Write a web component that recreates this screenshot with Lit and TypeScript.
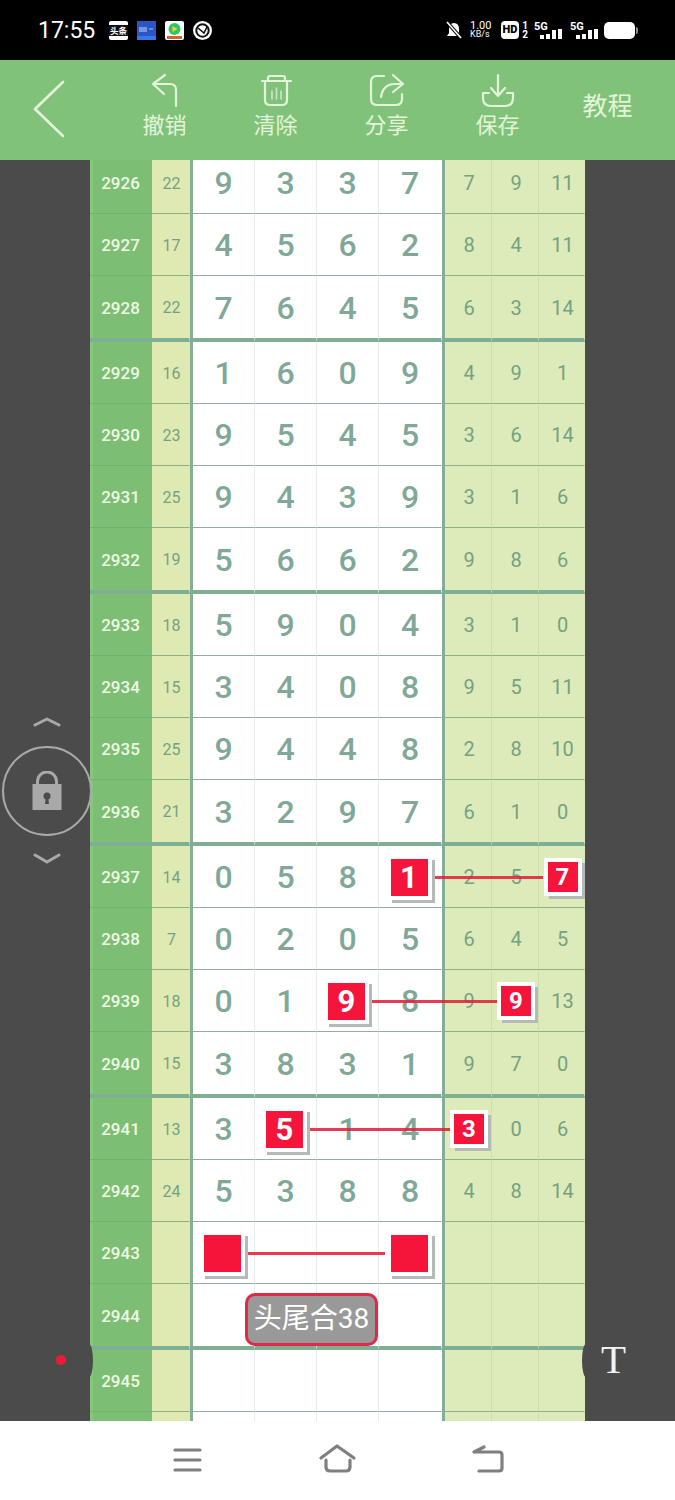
import { LitElement, html, css, svg, nothing } from "lit";
import { customElement } from "lit/decorators.js";

interface Mark {
  col: number; // 0-3 = white columns, 4-6 = green columns
  text?: string;
}

interface Row {
  no: number;
  sum?: number;
  digits?: number[];
  right?: number[];
  marks?: Mark[];
  line?: [number, number]; // page x start/end of the connector
  label?: string;
}

const ROWS: Row[] = [
  { no: 2926, sum: 22, digits: [9, 3, 3, 7], right: [7, 9, 11] },
  { no: 2927, sum: 17, digits: [4, 5, 6, 2], right: [8, 4, 11] },
  { no: 2928, sum: 22, digits: [7, 6, 4, 5], right: [6, 3, 14] },
  { no: 2929, sum: 16, digits: [1, 6, 0, 9], right: [4, 9, 1] },
  { no: 2930, sum: 23, digits: [9, 5, 4, 5], right: [3, 6, 14] },
  { no: 2931, sum: 25, digits: [9, 4, 3, 9], right: [3, 1, 6] },
  { no: 2932, sum: 19, digits: [5, 6, 6, 2], right: [9, 8, 6] },
  { no: 2933, sum: 18, digits: [5, 9, 0, 4], right: [3, 1, 0] },
  { no: 2934, sum: 15, digits: [3, 4, 0, 8], right: [9, 5, 11] },
  { no: 2935, sum: 25, digits: [9, 4, 4, 8], right: [2, 8, 10] },
  { no: 2936, sum: 21, digits: [3, 2, 9, 7], right: [6, 1, 0] },
  {
    no: 2937, sum: 14, digits: [0, 5, 8, 1], right: [2, 5, 7],
    marks: [{ col: 3, text: "1" }, { col: 6, text: "7" }], line: [432, 543],
  },
  { no: 2938, sum: 7, digits: [0, 2, 0, 5], right: [6, 4, 5] },
  {
    no: 2939, sum: 18, digits: [0, 1, 9, 8], right: [9, 9, 13],
    marks: [{ col: 2, text: "9" }, { col: 5, text: "9" }], line: [371, 497],
  },
  { no: 2940, sum: 15, digits: [3, 8, 3, 1], right: [9, 7, 0] },
  {
    no: 2941, sum: 13, digits: [3, 5, 1, 4], right: [3, 0, 6],
    marks: [{ col: 1, text: "5" }, { col: 4, text: "3" }], line: [310, 451],
  },
  { no: 2942, sum: 24, digits: [5, 3, 8, 8], right: [4, 8, 14] },
  { no: 2943, marks: [{ col: 0 }, { col: 3 }], line: [247, 385] },
  { no: 2944, label: "头尾合38" },
  { no: 2945 },
  { no: 2946 },
];

const TABLE_LEFT = 90;
const LAST_VISIBLE_NO = 2945; // the row after this one only peeks in, its number is below the fold

const ICONS = {
  undo: svg`<path d="M22 5 10 14l11 10M10 14h17q6 0 6 6v16"/>`,
  trash: svg`<path d="M8 11h29M14 11V8q0-2 2-2h13q2 0 2 2v3M11 11v19q0 5 5 5h12q5 0 5-5V11"/><path d="M18 21v8M22.5 18v11M27 21v8" stroke-width="1.6" opacity=".75"/>`,
  share: svg`<path d="M19 6h-7q-6 0-6 6v17q0 6 6 6h19q6 0 6-6v-5"/><path d="M28 5l10 9-10 8M38 14h-8q-12 0-14 13"/>`,
  save: svg`<path d="M22 5v21M15 18l7 8 7-8"/><path d="M13 23H7v5q0 8 8 8h14q8 0 8-8v-5h-6"/>`,
};

@customElement("app-root")
export class AppRoot extends LitElement {
  static styles = css`
    :host {
      display: block;
      width: 675px;
      height: 1500px;
      overflow: hidden;
      background: #fff;
      font-family: Roboto, "Noto Sans CJK SC", sans-serif;
    }
    .status {
      height: 60px;
      background: #000;
      color: #fff;
      display: flex;
      align-items: center;
      box-sizing: border-box;
      padding: 0 40px 0 38px;
    }
    .time {
      font-size: 23px;
      width: 71px;
    }
    .apps {
      display: flex;
      gap: 9px;
    }
    .app {
      width: 19px;
      height: 19px;
      display: block;
    }
    .sys {
      margin-left: auto;
      display: flex;
      align-items: center;
    }
    .speed {
      font-size: 9px;
      line-height: 9px;
      margin-left: 7px;
      width: 31px;
      text-align: left;
    }
    .speed b {
      display: block;
      font-size: 11px;
      font-weight: 400;
    }
    .hd {
      background: #fff;
      color: #000;
      font-size: 11px;
      font-weight: 900;
      width: 18px;
      height: 18px;
      line-height: 18px;
      text-align: center;
      border-radius: 4px;
    }
    .sim {
      font-size: 10px;
      font-weight: 700;
      line-height: 9px;
      width: 8px;
      margin-left: 2px;
      text-align: center;
    }
    .net {
      position: relative;
      width: 28px;
      height: 18px;
      margin-left: 8px;
      font-size: 11px;
      font-weight: 700;
      line-height: 11px;
    }
    .net.first {
      margin-left: 5px;
    }
    .net svg {
      position: absolute;
      left: 6px;
      top: 8px;
    }
    .battery {
      width: 31px;
      height: 17px;
      margin-left: 6px;
      background: #fff;
      border-radius: 5px;
      position: relative;
    }
    .battery::after {
      content: "";
      position: absolute;
      left: 32px;
      top: 5px;
      width: 2px;
      height: 7px;
      border-radius: 0 2px 2px 0;
      background: #8a8a8a;
    }

    .header {
      height: 100px;
      background: #81c27b;
      color: #e4f4d8;
      display: flex;
      box-sizing: border-box;
      padding: 10px 0 0 33px;
    }
    .back {
      width: 76px;
    }
    .action {
      width: 111px;
      display: flex;
      flex-direction: column;
      align-items: center;
      font-size: 22px;
      line-height: 24px;
    }
    .action svg,
    .back svg {
      fill: none;
      stroke: #e4f4d8;
      stroke-width: 2.2;
      stroke-linecap: round;
      stroke-linejoin: round;
      display: block;
    }
    .tutorial {
      width: 109px;
      text-align: center;
      font-size: 25px;
      line-height: 74px;
    }

    .body {
      position: relative;
      height: 1261px;
      background: #4b4b4b;
      overflow: hidden;
    }
    .table {
      width: 495px;
      margin: -8px 0 0 90px;
    }
    .row {
      position: relative;
      display: grid;
      grid-template-columns: 62px 38px 3px 62px 62px 62px 63px 3px 47px 47px 46px;
      height: 62px;
    }
    .row.end {
      height: 66px;
    }
    .cell {
      box-sizing: border-box;
      display: flex;
      align-items: center;
      justify-content: center;
      padding-top: 1px;
      border-bottom: 1px solid #93aba3;
      border-right: 1px solid transparent;
    }
    .end .cell,
    .end .bar {
      border-bottom: 4px solid #7fae92;
    }
    .no {
      background: #7cbe74;
      color: #f0fae4;
      font-size: 17px;
      font-weight: 500;
      border-bottom-color: #74b06e;
      box-shadow: inset 3px 0 0 #86c77e;
    }
    .sum {
      background: #dfeab2;
      color: #76a084;
      font-size: 16px;
      padding-left: 2px;
      border-bottom-color: #8fae85;
    }
    .bar {
      box-sizing: border-box;
      background: #86ae97;
    }
    .num {
      background: #fff;
      color: #7fa898;
      font-size: 32px;
      font-weight: 500;
      border-right-color: #e4edea;
    }
    .num.last,
    .rt.last {
      border-right-color: transparent;
    }
    .rt {
      background: #dcebb9;
      color: #76a182;
      font-size: 20px;
      padding-left: 2px;
      border-bottom-color: #8db085;
      border-right-color: #cbdfa9;
    }
    .mark {
      position: relative;
      z-index: 2;
      width: 37px;
      height: 37px;
      margin: 0 2px 0 0;
      background: #f5143a;
      color: #fff;
      font-size: 31px;
      font-weight: 700;
      line-height: 37px;
      text-align: center;
      box-shadow: 0 0 0 4px #fff, 4px 4px 0 3px #b6bab6;
    }
    .mark.small {
      width: 30px;
      height: 30px;
      margin: 0;
      font-size: 24px;
      line-height: 30px;
    }
    .link {
      position: absolute;
      z-index: 1;
      top: 30px;
      height: 3px;
      background: rgba(228, 32, 60, 0.88);
    }
    .label {
      position: absolute;
      z-index: 2;
      left: 155px;
      top: 9px;
      width: 133px;
      height: 53px;
      box-sizing: border-box;
      border: 3px solid #e0284a;
      border-radius: 10px;
      background: #999;
      color: #fff;
      font-size: 28px;
      line-height: 46px;
      text-align: center;
      white-space: nowrap;
    }

    /* floating controls over the sheet */
    .lock {
      position: absolute;
      left: 2px;
      top: 586px;
      width: 90px;
      height: 90px;
      box-sizing: border-box;
      border: 2px solid #a9a9a9;
      border-radius: 50%;
      display: flex;
      align-items: center;
      justify-content: center;
    }
    .chev {
      position: absolute;
      left: 33px;
      fill: none;
      stroke: #a9a9a9;
      stroke-width: 3;
      stroke-linecap: round;
      stroke-linejoin: round;
    }
    .tab {
      position: absolute;
      top: 1184px;
      width: 8px;
      height: 33px;
      background: #4b4b4b;
      border-radius: 50%;
    }
    .dot {
      position: absolute;
      left: 56px;
      top: 1195px;
      width: 10px;
      height: 10px;
      border-radius: 50%;
      background: #f01a35;
    }
    .tee {
      position: absolute;
      left: 601px;
      top: 1176px;
      color: #f2f2f2;
      font-family: "Liberation Serif", serif;
      font-size: 41px;
      line-height: 46px;
    }

    .nav {
      height: 79px;
      background: #fff;
    }
    .nav svg {
      display: block;
      fill: none;
      stroke: #7f7f7f;
      stroke-width: 3.2;
      stroke-linecap: round;
      stroke-linejoin: round;
    }
  `;

  private _renderStatus() {
    return html`
      <div class="status">
        <div class="time">17:55</div>
        <div class="apps">
          <svg class="app" viewBox="0 0 19 19">
            <rect width="19" height="19" rx="2" fill="#fff" />
            <rect y="4" width="19" height="11" fill="#111" />
            <text x="9.5" y="13" font-size="8.5" font-weight="700" text-anchor="middle" fill="#fff">头条</text>
          </svg>
          <svg class="app" viewBox="0 0 19 19">
            <rect width="19" height="19" fill="#2a57c8" />
            <path d="M3 6v5M5 6v5M7 6v5M9 6v5M12 8h4" stroke="#a9c0ee" stroke-width="1.2" />
            <rect y="15" width="19" height="4" fill="#3a78e6" />
          </svg>
          <svg class="app" viewBox="0 0 19 19">
            <rect width="19" height="19" rx="2" fill="#fff" />
            <circle cx="9.5" cy="8" r="6" fill="#2fc46a" />
            <path d="M7.5 5l5 3-5 3z" fill="#f6d21c" />
            <rect x="2" y="15" width="15" height="3" fill="#d8622c" />
          </svg>
          <svg class="app" viewBox="0 0 19 19">
            <circle cx="9.5" cy="9.5" r="9.5" fill="#fff" />
            <circle cx="9.5" cy="9.5" r="6.2" fill="none" stroke="#111" stroke-width="2" />
            <path d="M5 7l6 5 3-6" fill="none" stroke="#111" stroke-width="1.6" />
          </svg>
        </div>
        <div class="sys">
          <svg width="18" height="18" viewBox="0 0 18 18">
            <path d="M9 2q5 0 5 6v4l2 3H2l2-3V8q0-6 5-6z" fill="#fff" />
            <path d="M2 1l14 16" stroke="#000" stroke-width="3.5" />
            <path d="M2 1l14 16" stroke="#fff" stroke-width="1.6" />
          </svg>
          <div class="speed"><b>1.00</b>KB/s</div>
          <div class="hd">HD</div>
          <div class="sim">1<br />2</div>
          <div class="net first">5G${this._signal()}</div>
          <div class="net">5G${this._signal()}</div>
          <div class="battery"></div>
        </div>
      </div>
    `;
  }

  private _signal() {
    return html`<svg width="22" height="10" viewBox="0 0 22 10" fill="#fff">
      <rect x="0" y="6" width="4" height="4" />
      <rect x="6" y="5" width="4" height="5" />
      <rect x="12" y="1" width="4" height="9" />
      <rect x="18" y="0" width="4" height="10" />
    </svg>`;
  }

  private _renderHeader() {
    const actions: Array<[string, unknown]> = [
      ["撤销", ICONS.undo],
      ["清除", ICONS.trash],
      ["分享", ICONS.share],
      ["保存", ICONS.save],
    ];
    return html`
      <div class="header">
        <div class="back">
          <svg width="32" height="70" viewBox="0 0 32 70">
            <path d="M30 12 2 39l28 27" stroke-width="2.6" />
          </svg>
        </div>
        ${actions.map(
          ([name, icon]) => html`
            <div class="action">
              <svg width="44" height="44" viewBox="0 0 44 44">${icon}</svg>
              ${name}
            </div>
          `,
        )}
        <div class="tutorial">教程</div>
      </div>
    `;
  }

  private _markAt(row: Row, col: number) {
    const m = row.marks?.find((x) => x.col === col);
    if (!m) return nothing;
    return html`<div class="mark ${col > 3 ? "small" : ""}">${m.text ?? ""}</div>`;
  }

  private _renderRow(row: Row) {
    // every fourth row (2928, 2932, ...) closes a group with a thick rule
    const end = (row.no - 2928) % 4 === 0;
    const w = row.line ? row.line[1] - row.line[0] : 0;
    return html`
      <div class="row ${end ? "end" : ""}">
        <div class="cell no">${row.no <= LAST_VISIBLE_NO ? row.no : ""}</div>
        <div class="cell sum">${row.sum ?? ""}</div>
        <div class="bar"></div>
        ${[0, 1, 2, 3].map((c) => {
          const marked = row.marks?.some((m) => m.col === c);
          return html`<div class="cell num ${c === 3 ? "last" : ""}">
            ${marked ? this._markAt(row, c) : row.digits?.[c] ?? ""}
          </div>`;
        })}
        <div class="bar"></div>
        ${[0, 1, 2].map((c) => {
          const marked = row.marks?.some((m) => m.col === c + 4);
          return html`<div class="cell rt ${c === 2 ? "last" : ""}">
            ${marked ? this._markAt(row, c + 4) : row.right?.[c] ?? ""}
          </div>`;
        })}
        ${row.line
          ? html`<div class="link" style="left:${row.line[0] - TABLE_LEFT}px;width:${w}px"></div>`
          : nothing}
        ${row.label ? html`<div class="label">${row.label}</div>` : nothing}
      </div>
    `;
  }

  private _renderNav() {
    return html`
      <div class="nav">
        <svg width="675" height="79" viewBox="0 0 675 79">
          <path d="M175 29h25M175 39h25M175 49h25" />
          <path d="M321 37l16-12 17 12M326 39v7q0 4 4 4h16q4 0 4-4v-7" />
          <path d="M484 26l-10 5h25q3 0 3 3v13q0 3-3 3h-20" />
        </svg>
      </div>
    `;
  }

  render() {
    return html`
      ${this._renderStatus()} ${this._renderHeader()}
      <div class="body">
        <div class="table">${ROWS.map((r) => this._renderRow(r))}</div>
        <svg class="chev" style="top:555px" width="28" height="12" viewBox="0 0 28 12">
          <path d="M2 10l12-6 12 6" />
        </svg>
        <div class="lock">
          <svg width="30" height="40" viewBox="0 0 30 40">
            <path d="M5.5 15V10.5a9.5 9.5 0 0 1 19 0V15" fill="none" stroke="#a9a9a9" stroke-width="3" />
            <rect x="0.5" y="13" width="29" height="26" fill="#a9a9a9" />
            <circle cx="15" cy="25" r="3.5" fill="#4b4b4b" />
            <path d="M13.8 26h2.4l.8 7h-4z" fill="#4b4b4b" />
          </svg>
        </div>
        <svg class="chev" style="top:692px" width="28" height="12" viewBox="0 0 28 12">
          <path d="M2 3l12 7 12-7" />
        </svg>
        <div class="tab" style="left:85px"></div>
        <div class="tab" style="left:582px"></div>
        <div class="dot"></div>
        <div class="tee">T</div>
      </div>
      ${this._renderNav()}
    `;
  }
}

declare global {
  interface HTMLElementTagNameMap {
    "app-root": AppRoot;
  }
}
